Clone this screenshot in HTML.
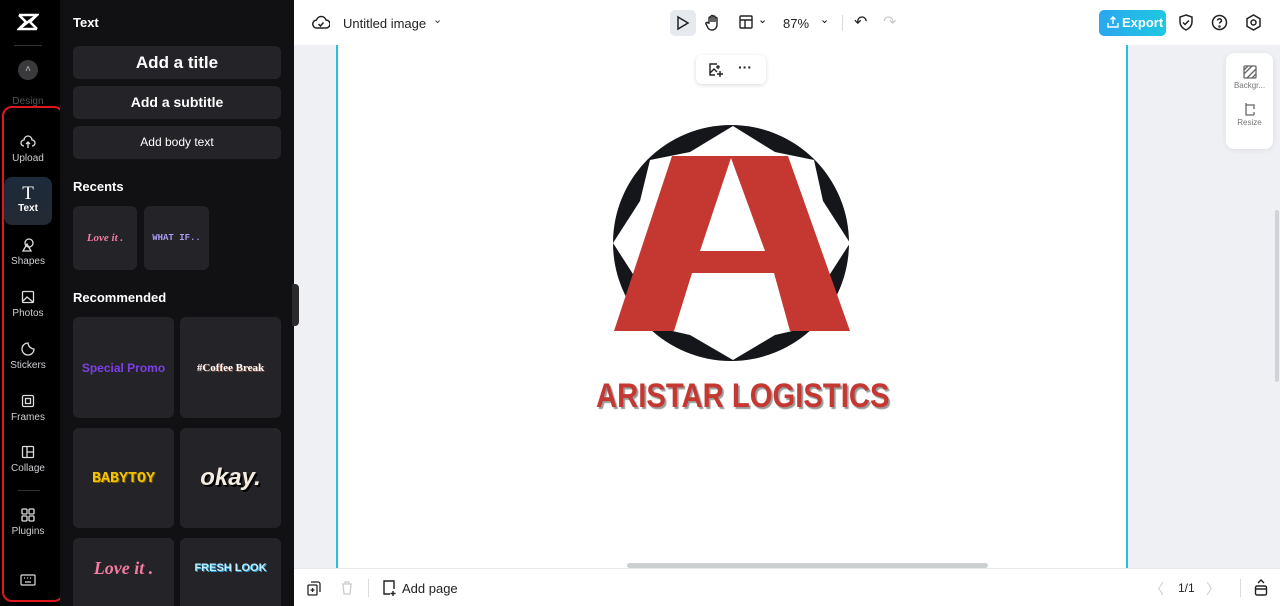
<!DOCTYPE html>
<html><head><meta charset="utf-8"><style>
*{box-sizing:border-box;margin:0;padding:0}
html,body{width:1280px;height:606px;overflow:hidden}
body{font-family:"Liberation Sans",sans-serif;background:#eef0f3;position:relative}
.rail{position:absolute;left:0;top:0;width:60px;height:606px;background:#000;overflow:hidden}
.panel{position:absolute;left:60px;top:0;width:234px;height:606px;background:#111113;color:#fff;overflow:hidden}
.ri{position:absolute;left:0;width:56px;text-align:center;color:#cfd0d3;font-size:10px}
.ri svg{display:block;margin:0 auto 3px}
.btn{position:absolute;left:13px;width:208px;height:33px;background:#242428;border-radius:6px;color:#fff;text-align:center;font-weight:bold}
.card{position:absolute;background:#242428;border-radius:6px;display:flex;align-items:center;justify-content:center;font-weight:bold}
h3{position:absolute;left:13px;font-size:13px;font-weight:bold;color:#fff}
.top{position:absolute;left:294px;top:0;width:986px;height:45px;background:#fff}
.bot{position:absolute;left:294px;top:568px;width:986px;height:38px;background:#fff;border-top:1px solid #e8e9eb}
.page{position:absolute;left:336px;top:45px;width:792px;height:523px;background:#fff;border-left:2px solid #22c3dc;border-right:2px solid #22c3dc}
</style></head><body>
<div class="rail">
 <svg style="position:absolute;left:17px;top:13px" width="22" height="18" viewBox="0 0 22 18"><path d="M2 2h18L2 16h18M2 2l7 7M20 2l-7 7M2 16l7-7M20 16l-7-7" stroke="#fff" stroke-width="2.5" fill="none"/></svg>
 <div style="position:absolute;left:14px;top:45px;width:28px;height:1px;background:#333"></div>
 <div style="position:absolute;left:18px;top:60px;width:20px;height:20px;border-radius:50%;background:#3a3a3d;color:#bbb;font-size:10px;text-align:center;line-height:20px">˄</div>
 <div class="ri" style="top:96px;color:#555">Design</div>
 <div style="position:absolute;left:2px;top:106px;width:62px;height:496px;border:2px solid #e0161e;border-radius:10px"></div>
 <div class="ri" style="top:134px"><svg width="16" height="16" viewBox="0 0 16 16" fill="none" stroke="#ddd" stroke-width="1.3"><path d="M4 12a3 3 0 010-6 4 4 0 018 0 3 3 0 010 6M8 14V8M6 10l2-2 2 2"/></svg>Upload</div>
 <div style="position:absolute;left:4px;top:177px;width:48px;height:48px;border-radius:8px;background:linear-gradient(#1c2a3a,#232a33)"></div>
 <div class="ri" style="top:185px;color:#fff;font-weight:bold"><span style="font-family:'Liberation Serif';font-size:19px;font-weight:normal;display:block;line-height:18px">T</span>Text</div>
 <div class="ri" style="top:237px"><svg width="16" height="16" viewBox="0 0 16 16" fill="none" stroke="#ddd" stroke-width="1.3"><circle cx="9" cy="6" r="4"/><path d="M3 14l4-7 4 7z"/></svg>Shapes</div>
 <div class="ri" style="top:289px"><svg width="16" height="16" viewBox="0 0 16 16" fill="none" stroke="#ddd" stroke-width="1.3"><rect x="2.5" y="2.5" width="11" height="11" rx="1"/><path d="M3 12l4-4 6 5"/></svg>Photos</div>
 <div class="ri" style="top:341px"><svg width="16" height="16" viewBox="0 0 16 16" fill="none" stroke="#ddd" stroke-width="1.3"><path d="M14 8a6 6 0 11-6-6c0 3 3 6 6 6z"/></svg>Stickers</div>
 <div class="ri" style="top:393px"><svg width="16" height="16" viewBox="0 0 16 16" fill="none" stroke="#ddd" stroke-width="1.3"><rect x="2.5" y="2.5" width="11" height="11" rx="1.5"/><rect x="5.5" y="5.5" width="5" height="5"/></svg>Frames</div>
 <div class="ri" style="top:444px"><svg width="16" height="16" viewBox="0 0 16 16" fill="none" stroke="#ddd" stroke-width="1.3"><rect x="2.5" y="2.5" width="11" height="11" rx="1"/><path d="M7 2.5v11M7 8h6.5"/></svg>Collage</div>
 <div style="position:absolute;left:18px;top:490px;width:22px;height:1px;background:#333"></div>
 <div class="ri" style="top:507px"><svg width="16" height="16" viewBox="0 0 16 16" fill="none" stroke="#ddd" stroke-width="1.3"><rect x="2" y="2" width="5" height="5" rx="1"/><rect x="9" y="2" width="5" height="5" rx="1"/><rect x="2" y="9" width="5" height="5" rx="1"/><rect x="9" y="9" width="5" height="5" rx="1"/></svg>Plugins</div>
 <svg style="position:absolute;left:20px;top:574px" width="16" height="12" viewBox="0 0 16 12" fill="none" stroke="#ddd" stroke-width="1.2"><rect x="1" y="1" width="14" height="10" rx="1"/><path d="M4 4h1M7 4h1M10 4h1M5 8h6"/></svg>
</div>
<div class="panel">
 <h3 style="top:15px">Text</h3>
 <div class="btn" style="top:46px;font-size:17px;line-height:33px">Add a title</div>
 <div class="btn" style="top:86px;font-size:14px;line-height:33px">Add a subtitle</div>
 <div class="btn" style="top:126px;font-size:12px;font-weight:normal;line-height:33px">Add body text</div>
 <h3 style="top:179px">Recents</h3>
 <div class="card" style="left:13px;top:206px;width:64px;height:64px;color:#f57ba0;font-family:'Liberation Serif';font-style:italic;font-size:11px">Love it .</div>
 <div class="card" style="left:84px;top:206px;width:65px;height:64px;color:#a99cf5;font-family:'Liberation Mono';font-size:9px">WHAT IF..</div>
 <h3 style="top:290px">Recommended</h3>
 <div class="card" style="left:13px;top:317px;width:101px;height:101px;color:#7b3fe8;font-size:12px">Special Promo</div>
 <div class="card" style="left:120px;top:317px;width:101px;height:101px;color:#fff;font-family:'Liberation Serif';font-size:11px;text-shadow:1px 1px #7a4a3a">#Coffee Break</div>
 <div class="card" style="left:13px;top:428px;width:101px;height:100px;color:#f5c400;font-family:'Liberation Mono';font-size:15px;text-shadow:1px 1px #7a5a00">BABYTOY</div>
 <div class="card" style="left:120px;top:428px;width:101px;height:100px;color:#f4ece0;font-style:italic;font-size:24px;text-shadow:2px 2px #000">okay.</div>
 <div class="card" style="left:13px;top:538px;width:101px;height:80px;color:#f57ba0;font-family:'Liberation Serif';font-style:italic;font-size:18px;padding-bottom:20px">Love it .</div>
 <div class="card" style="left:120px;top:538px;width:101px;height:80px;color:#bfeeff;font-size:11px;padding-bottom:20px;text-shadow:1px 1px #2a9ad0">FRESH LOOK</div>
</div>
<div style="position:absolute;left:292px;top:284px;width:7px;height:42px;background:#2a2a2d;border-radius:0 4px 4px 0"></div>
<div class="top">
 <svg style="position:absolute;left:18px;top:15px" width="18" height="15" viewBox="0 0 18 15" fill="none" stroke="#222" stroke-width="1.5"><path d="M5 13a4 4 0 01-.5-8A5 5 0 0114 5a4 4 0 010 8z"/><path d="M6.5 9l2 2 3-3.5"/></svg>
 <div style="position:absolute;left:49px;top:16px;font-size:13px;color:#222">Untitled image</div>
 <div style="position:absolute;left:139px;top:13px;font-size:11px;color:#333">⌄</div>
 <div style="position:absolute;left:376px;top:10px;width:26px;height:26px;border-radius:5px;background:#e6e9ee"></div>
 <svg style="position:absolute;left:382px;top:15px" width="14" height="16" viewBox="0 0 14 16" fill="none" stroke="#222" stroke-width="1.5"><path d="M2 2l10 6-10 6z"/></svg>
 <svg style="position:absolute;left:411px;top:14px" width="16" height="17" viewBox="0 0 16 17" fill="none" stroke="#222" stroke-width="1.4"><path d="M4 9V4a1 1 0 012 0v4V2.5a1 1 0 012 0V8 3a1 1 0 012 0v5-3.5a1 1 0 012 0V11a5 5 0 01-5 5 5 5 0 01-4-2l-2-4a1 1 0 012-1z"/></svg>
 <svg style="position:absolute;left:445px;top:15px" width="14" height="14" viewBox="0 0 14 14" fill="none" stroke="#222" stroke-width="1.4"><rect x="1" y="1" width="12" height="12" rx="1"/><path d="M1 5h12M6 5v8"/></svg>
 <div style="position:absolute;left:464px;top:13px;font-size:11px">⌄</div>
 <div style="position:absolute;left:489px;top:16px;font-size:13px;color:#222">87%</div>
 <div style="position:absolute;left:526px;top:13px;font-size:11px">⌄</div>
 <div style="position:absolute;left:548px;top:15px;width:1px;height:16px;background:#ddd"></div>
 <div style="position:absolute;left:560px;top:12px;font-size:16px;color:#222">↶</div>
 <div style="position:absolute;left:589px;top:12px;font-size:16px;color:#ccc">↷</div>
 <div style="position:absolute;left:805px;top:10px;width:67px;height:26px;border-radius:5px;background:linear-gradient(90deg,#2ba6f0,#1ec8e0);color:#fff;font-weight:bold;font-size:13px;line-height:26px;padding-left:23px">Export</div>
 <svg style="position:absolute;left:813px;top:16px" width="12" height="12" viewBox="0 0 12 12" fill="none" stroke="#fff" stroke-width="1.4"><path d="M1 7v4h10V7M6 8V1M3.5 3.5L6 1l2.5 2.5"/></svg>
 <svg style="position:absolute;left:884px;top:14px" width="16" height="17" viewBox="0 0 16 17" fill="none" stroke="#222" stroke-width="1.5"><path d="M8 1l6 2v5c0 4-3 6.5-6 8-3-1.5-6-4-6-8V3z"/><path d="M5 8.5l2 2 4-4"/></svg>
 <svg style="position:absolute;left:917px;top:14px" width="17" height="17" viewBox="0 0 17 17" fill="none" stroke="#222" stroke-width="1.5"><circle cx="8.5" cy="8.5" r="7"/><path d="M6.5 6.5a2 2 0 114 .5c-.5 1-2 1.2-2 2.5"/><circle cx="8.5" cy="12.5" r=".5"/></svg>
 <svg style="position:absolute;left:951px;top:14px" width="17" height="17" viewBox="0 0 17 17" fill="none" stroke="#222" stroke-width="1.5"><path d="M8.5 1l6.5 3.7v7.6L8.5 16 2 12.3V4.7z"/><circle cx="8.5" cy="8.5" r="2.5"/></svg>
</div>
<div class="page"></div>
<svg style="position:absolute;left:610px;top:122px" width="244" height="242" viewBox="610 122 244 242">
  <circle cx="731" cy="243" r="118" fill="#15161a"/>
  <polygon fill="#fff" points="733,126 775,152 814,160 823,201 850,243 823,285 814,326 775,335 733,360 690,335 650,326 640,285 613,243 640,201 650,160 690,152"/>
  <path fill="#c53832" fill-rule="evenodd" d="M672 156h116l62 175h-60l-16-58h-82l-18 58h-60zM731 158l-31 93h65z"/>
</svg>
<div style="position:absolute;left:596px;top:376px;width:290px;height:40px;color:#c53832;font-weight:bold;font-size:34px;line-height:40px;white-space:nowrap;text-shadow:2px 2px 1px #999;transform:scaleX(0.86);transform-origin:left center">ARISTAR LOGISTICS</div>
<div style="position:absolute;left:696px;top:55px;width:70px;height:29px;background:#fff;border-radius:6px;box-shadow:0 1px 4px rgba(0,0,0,.15)"></div>
<svg style="position:absolute;left:708px;top:62px" width="16" height="16" viewBox="0 0 16 16" fill="none" stroke="#222" stroke-width="1.4"><path d="M9 2H2v11h5M2 11l4-4 3 3"/><circle cx="10" cy="5" r="1"/><path d="M12 9v6M9 12h6"/></svg>
<div style="position:absolute;left:738px;top:59px;font-size:14px;font-weight:bold;color:#222">···</div>
<div style="position:absolute;left:1226px;top:53px;width:47px;height:96px;background:#fff;border-radius:8px;box-shadow:0 1px 6px rgba(0,0,0,.08);text-align:center;font-size:8px;color:#777">
 <svg style="margin-top:12px" width="14" height="14" viewBox="0 0 14 14" fill="none" stroke="#666" stroke-width="1.3"><rect x="1" y="1" width="12" height="12" rx="1"/><path d="M1 9l8-8M4 13l9-9M1 5l4-4M9 13l4-4"/></svg><div>Backgr...</div>
 <svg style="margin-top:12px" width="14" height="14" viewBox="0 0 14 14" fill="none" stroke="#666" stroke-width="1.3"><path d="M3 1v12h8M3 3h8v4M11 10v3"/></svg><div>Resize</div>
</div>
<div style="position:absolute;left:627px;top:563px;width:361px;height:5px;border-radius:3px;background:#ccd0d0"></div>
<div style="position:absolute;left:1275px;top:210px;width:4px;height:172px;border-radius:2px;background:#cfd2d6"></div>
<div class="bot">
 <svg style="position:absolute;left:13px;top:12px" width="14" height="15" viewBox="0 0 14 15" fill="none" stroke="#222" stroke-width="1.3"><rect x="1" y="4" width="9" height="10" rx="1"/><path d="M4 1h7a2 2 0 012 2v8"/><path d="M5.5 7v4M3.5 9h4"/></svg>
 <svg style="position:absolute;left:47px;top:12px" width="12" height="14" viewBox="0 0 12 14" fill="none" stroke="#ccc" stroke-width="1.3"><path d="M1 3h10M4 3V1h4v2M2 3l1 10h6l1-10"/></svg>
 <div style="position:absolute;left:74px;top:10px;width:1px;height:18px;background:#ddd"></div>
 <svg style="position:absolute;left:88px;top:11px" width="14" height="16" viewBox="0 0 14 16" fill="none" stroke="#222" stroke-width="1.4"><path d="M8 14H2V1h10v8M11 11v5M8.5 13.5h5"/></svg>
 <div style="position:absolute;left:108px;top:12px;font-size:13px;color:#222">Add page</div>
 <div style="position:absolute;left:856px;top:10px;font-size:14px;color:#ccc">〈</div>
 <div style="position:absolute;left:884px;top:12px;font-size:12px;color:#222">1/1</div>
 <div style="position:absolute;left:912px;top:10px;font-size:14px;color:#ccc">〉</div>
 <div style="position:absolute;left:946px;top:10px;width:1px;height:18px;background:#ddd"></div>
 <svg style="position:absolute;left:960px;top:10px" width="14" height="17" viewBox="0 0 14 17" fill="none" stroke="#222" stroke-width="1.4"><rect x="1.5" y="7" width="11" height="9" rx="1.5"/><path d="M1.5 10h11M4 4l3-3 3 3"/></svg>
</div>
</body></html>
